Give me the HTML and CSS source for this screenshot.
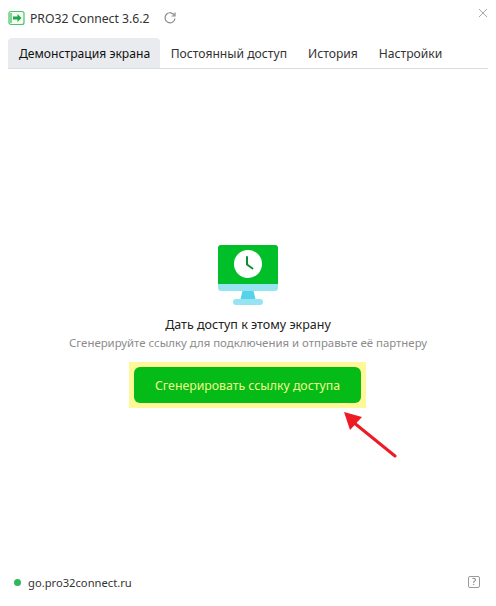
FILE: index.html
```html
<!DOCTYPE html>
<html>
<head>
  <title>PRO32 Connect</title>
  <link rel="stylesheet" href="styles.css">
</head>
<body>

<div class="app">
  <div class="titlebar">
    <svg class="logo" width="17" height="16" viewBox="0 0 17 16">
      <rect x="1" y="1.500" width="15" height="13" rx="2" fill="#f4fbf5" stroke="#4cc268" stroke-width="1.200"/>
      <path d="M1.500 3h2.500v10h-2.500z" fill="#7fd695"/>
      <path d="M5 6.500h4.500V4l4 4-4 4V9.500H5z" fill="#22a84a"/>
    </svg>
    <span class="title">PRO32 Connect 3.6.2</span>
    <svg class="refresh" width="14" height="14" viewBox="0 0 14 14" fill="none" stroke="#8a8a8a" stroke-width="1.200">
      <path d="M11.500 4.500A5 5 0 1 0 12 7.500"/>
      <path d="M12 1.500v3.500H8.500"/>
    </svg>
    <svg class="close" width="10" height="10" viewBox="0 0 10 10" stroke="#909090" stroke-width="0.800">
      <path d="M1 1l8 8M9 1l-8 8"/>
    </svg>
  </div>

  <div class="tabs">
    <div class="tab active">Демонстрация экрана</div>
    <div class="tab">Постоянный доступ</div>
    <div class="tab">История</div>
    <div class="tab">Настройки</div>
  </div>

  <div class="main">
    <svg class="monitor" width="60" height="60" viewBox="0 0 60 60">
      <path d="M0 39V3a3 3 0 0 1 3-3h54a3 3 0 0 1 3 3v36z" fill="#00bf29"/>
      <path d="M0 39h60v4a3 3 0 0 1-3 3H3a3 3 0 0 1-3-3z" fill="#96e4f2"/>
      <path d="M24.500 46h11l2 8h-15z" fill="#56d3e8"/>
      <rect x="15" y="54" width="30" height="6" rx="3" fill="#96e4f2"/>
      <circle cx="30" cy="19" r="14" fill="#fff"/>
      <path d="M29 12V19.500l5.500 4" fill="none" stroke="#0c8f33" stroke-width="2" stroke-linecap="round" stroke-linejoin="round"/>
    </svg>
    <div class="heading">Дать доступ к этому экрану</div>
    <div class="hint">Сгенерируйте ссылку для подключения и отправьте её партнеру</div>
    <div class="highlight">
      <button class="generate">Сгенерировать ссылку доступа</button>
      <svg class="arrow" width="56" height="52" viewBox="0 0 56 52">
        <path d="M54 49L12 15" stroke="#ed1c24" stroke-width="3" stroke-linecap="round"/>
        <path d="M3 5l18 5-12 13z" fill="#ed1c24"/>
      </svg>
    </div>
  </div>

  <div class="footer">
    <span class="dot"></span>
    <span class="host">go.pro32connect.ru</span>
    <span class="help">?</span>
  </div>
</div>

</body>
</html>
```

FILE: styles.css
```css
html, body {
  margin: 0;
  height: 100%;
  background: #fff;
}
body {
  font-family: "Noto Sans", sans-serif;
  font-size: 13px;
  color: #222;
}
.app {
  height: 606px;
  display: flex;
  flex-direction: column;
  overflow: hidden;
}
.titlebar {
  height: 38px;
  display: flex;
  align-items: center;
  padding: 0 8px 2px 8px;
  box-sizing: border-box;
}
.title {
  margin-left: 5px;
  font-size: 12.200px;
  color: #333;
}
.refresh {
  margin-left: 14px;
}
.close {
  margin-left: auto;
  margin-top: -11px;
}
.tabs {
  display: flex;
  margin: 0 8px;
  height: 31px;
  box-sizing: border-box;
  border-bottom: 1px solid #d9dce1;
}
.tab {
  padding: 0 10.500px;
  line-height: 32px;
  font-size: 12.150px;
  color: #333;
}
.tab.active {
  background: #e9ebee;
  border-radius: 4px 4px 0 0;
  color: #111;
  padding: 0 10px 0 11px;
}
.main {
  flex: 1;
  display: flex;
  flex-direction: column;
  align-items: center;
  padding-top: 176px;
}
.heading {
  margin-top: 10px;
  line-height: 20px;
  font-size: 12.500px;
  color: #222;
}
.hint {
  margin-top: -1px;
  line-height: 18px;
  font-size: 11.400px;
  color: #8c8c8c;
}
.highlight {
  position: relative;
  left: -0.500px;
  margin-top: 10px;
  padding: 5px;
  background: #fff899;
}
.generate {
  display: block;
  width: 227px;
  height: 36px;
  border: 0;
  border-radius: 6px;
  background: #04bb17;
  color: #f2f98c;
  font-family: inherit;
  font-size: 12.300px;
}
.arrow {
  position: absolute;
  left: 212px;
  top: 45px;
}
.footer {
  display: flex;
  align-items: center;
  height: 26px;
  padding: 0 16px 11px 14px;
}
.dot {
  width: 7px;
  height: 7px;
  border-radius: 50%;
  background: #2eb85c;
}
.host {
  margin-left: 7px;
  font-size: 11.200px;
  color: #333;
}
.help {
  margin-left: auto;
  width: 10px;
  height: 10px;
  border: 1.500px solid #999;
  border-radius: 2px;
  font-size: 9px;
  line-height: 10px;
  text-align: center;
  color: #666;
}
```
